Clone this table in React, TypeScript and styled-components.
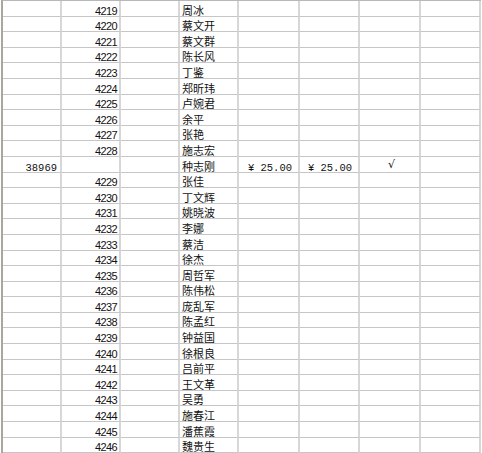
import React from 'react';
import styled, { createGlobalStyle } from 'styled-components';

const Global = createGlobalStyle`
  html, body { margin: 0; padding: 0; background: #ffffff; }
  body { width: 482px; height: 453px; overflow: hidden; }
`;

const Sheet = styled.div`
  display: grid;
  grid-template-columns: 59px 59px 59px 59px 61px 60px 61px 60px;
  grid-auto-rows: 15.6px;
  margin-left: 1px;
  border-left: 2px solid #aba79f;
  border-top: 1px solid #b8b8b8;
  width: max-content;
`;

const Row = styled.div`
  display: contents;
`;

type Kind = 'num' | 'name' | 'money' | 'id' | 'mark' | 'blank';

const Cell = styled.div<{ $kind: Kind }>`
  box-sizing: border-box;
  border-right: 2px solid #d7d7d7;
  border-bottom: 1px solid #c6c6c6;
  display: flex;
  align-items: flex-end;
  overflow: hidden;
  white-space: nowrap;
  color: #111;
  justify-content: ${(p) =>
    p.$kind === 'name' ? 'flex-start' : p.$kind === 'mark' ? 'center' : 'flex-end'};
  padding: ${(p) =>
    p.$kind === 'name'
      ? '0 0 0 2px'
      : p.$kind === 'money'
      ? '0 6px 0 0'
      : p.$kind === 'id'
      ? '0 3px 0 0'
      : p.$kind === 'mark'
      ? '0 0 2px 4px'
      : '0 2px 0 0'};
  font-family: ${(p) =>
    p.$kind === 'name'
      ? '"Noto Sans CJK SC", sans-serif'
      : p.$kind === 'mark'
      ? '"DejaVu Sans", sans-serif'
      : p.$kind === 'money' || p.$kind === 'id'
      ? '"Liberation Mono", monospace'
      : '"Liberation Sans", sans-serif'};
  font-size: ${(p) =>
    p.$kind === 'money' || p.$kind === 'id' ? '10.5px' : '11px'};
  line-height: ${(p) =>
    p.$kind === 'name'
      ? '12px'
      : p.$kind === 'money' || p.$kind === 'id'
      ? '7px'
      : p.$kind === 'mark'
      ? '10px'
      : '9px'};
  letter-spacing: ${(p) => (p.$kind === 'num' ? '-0.6px' : '0')};
`;

type RowData = { id?: string; code?: string; name: string; a?: string; b?: string; ok?: boolean };

const rows: RowData[] = [
  { code: '4219', name: '周冰' },
  { code: '4220', name: '蔡文开' },
  { code: '4221', name: '蔡文群' },
  { code: '4222', name: '陈长风' },
  { code: '4223', name: '丁鉴' },
  { code: '4224', name: '郑昕玮' },
  { code: '4225', name: '卢婉君' },
  { code: '4226', name: '余平' },
  { code: '4227', name: '张艳' },
  { code: '4228', name: '施志宏' },
  { id: '38969', name: '种志刚', a: '¥ 25.00', b: '¥ 25.00', ok: true },
  { code: '4229', name: '张佳' },
  { code: '4230', name: '丁文辉' },
  { code: '4231', name: '姚晓波' },
  { code: '4232', name: '李娜' },
  { code: '4233', name: '蔡洁' },
  { code: '4234', name: '徐杰' },
  { code: '4235', name: '周哲军' },
  { code: '4236', name: '陈伟松' },
  { code: '4237', name: '庞乱军' },
  { code: '4238', name: '陈孟红' },
  { code: '4239', name: '钟益国' },
  { code: '4240', name: '徐根良' },
  { code: '4241', name: '吕前平' },
  { code: '4242', name: '王文革' },
  { code: '4243', name: '吴勇' },
  { code: '4244', name: '施春江' },
  { code: '4245', name: '潘蕉霞' },
  { code: '4246', name: '魏贵生' },
];

export default function App() {
  return (
    <>
      <Global />
      <Sheet>
        {rows.map((r, i) => (
          <Row key={i}>
            <Cell $kind={r.id ? 'id' : 'blank'}>{r.id ?? ''}</Cell>
            <Cell $kind="num">{r.code ?? ''}</Cell>
            <Cell $kind="blank" />
            <Cell $kind="name">{r.name}</Cell>
            <Cell $kind="money">{r.a ?? ''}</Cell>
            <Cell $kind="money">{r.b ?? ''}</Cell>
            <Cell $kind="mark">{r.ok ? '√' : ''}</Cell>
            <Cell $kind="blank" />
          </Row>
        ))}
      </Sheet>
    </>
  );
}
